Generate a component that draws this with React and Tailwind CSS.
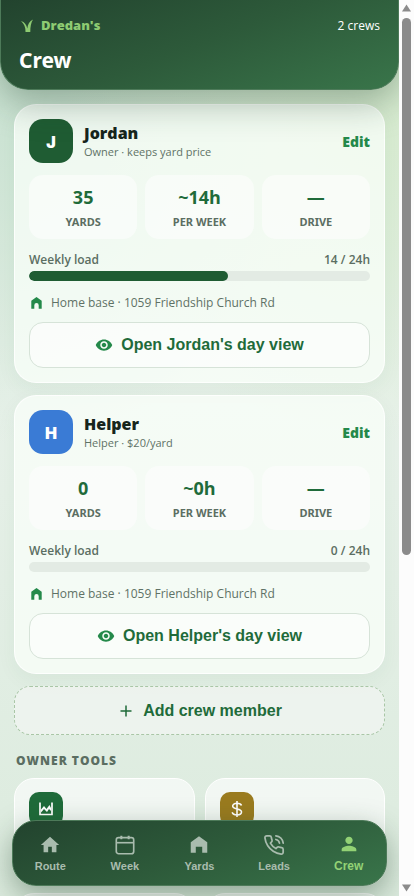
import React from "react";

const crews = [
  {
    name: "Jordan",
    initial: "J",
    detail: "Owner · keeps yard price",
    avatar: "bg-[#1f5c33]",
    stats: [["35", "YARDS"], ["~14h", "PER WEEK"], ["—", "DRIVE"]],
    hours: 14,
  },
  {
    name: "Helper",
    initial: "H",
    detail: "Helper · $20/yard",
    avatar: "bg-[#3a7bd5]",
    stats: [["0", "YARDS"], ["~0h", "PER WEEK"], ["—", "DRIVE"]],
    hours: 0,
  },
];
const CAPACITY = 24;

function GrassIcon() {
  return (
    <svg width="16" height="16" viewBox="0 0 16 16" fill="#8ecb72" aria-hidden="true">
      <path d="M2 3C5.500 4 7.400 6.500 8.300 10.500 8.800 6.500 10.500 3 14 1.500 12 4.500 11.300 9 11.300 14H6.500C6.800 9.500 5 5.500 2 3Z" />
    </svg>
  );
}

function CottageIcon({ size, className }) {
  return (
    <svg width={size} height={size} viewBox="0 0 24 24" fill="currentColor" className={className} aria-hidden="true">
      <path d="M12 2.500 3 9v11.500h5.500V14h7v6.500H21V9Z" />
    </svg>
  );
}

function BaseIcon() {
  return (
    <svg width="14" height="14" viewBox="0 0 14 14" fill="#24894a" aria-hidden="true">
      <path d="M7.500 1 2.300 4.700V12.700H5.300V9.200a2.200 2.200 0 0 1 4.400 0V12.700H12.700V4.700Z" />
    </svg>
  );
}

function EyeIcon() {
  return (
    <svg width="18" height="18" viewBox="0 0 24 24" fill="#24894a" aria-hidden="true">
      <path d="M12 4.500C7 4.500 2.730 7.610 1 12c1.730 4.390 6 7.500 11 7.500s9.270-3.110 11-7.500c-1.730-4.390-6-7.500-11-7.500zM12 17c-2.760 0-5-2.240-5-5s2.240-5 5-5 5 2.240 5 5-2.240 5-5 5zm0-8c-1.660 0-3 1.340-3 3s1.340 3 3 3 3-1.340 3-3-1.340-3-3-3z" />
    </svg>
  );
}

function RouteIcon() {
  return (
    <svg width="22" height="22" viewBox="0 0 24 24" fill="currentColor" aria-hidden="true">
      <path d="M10 20v-6h4v6h5v-8h3L12 3 2 12h3v8z" />
    </svg>
  );
}

function CalendarIcon() {
  return (
    <svg width="22" height="22" viewBox="0 0 24 24" fill="none" stroke="currentColor" strokeWidth="1.800" aria-hidden="true">
      <rect x="2.500" y="4" width="19" height="17.500" rx="2.500" />
      <path d="M2.500 9.500h19" />
      <path d="M8 1.800v4M16 1.800v4" strokeWidth="2.200" />
    </svg>
  );
}

function PhoneIcon() {
  return (
    <svg width="22" height="22" viewBox="0 0 24 24" fill="none" stroke="currentColor" strokeWidth="1.900" strokeLinecap="round" strokeLinejoin="round" aria-hidden="true">
      <path d="M14.050 2a9 9 0 0 1 8 7.940M14.050 6A5 5 0 0 1 18 10" />
      <path d="M22 16.920v3a2 2 0 0 1-2.180 2 19.790 19.790 0 0 1-8.630-3.070 19.500 19.500 0 0 1-6-6 19.790 19.790 0 0 1-3.070-8.670A2 2 0 0 1 4.110 2h3a2 2 0 0 1 2 1.720 12.840 12.840 0 0 0 .7 2.810 2 2 0 0 1-.45 2.110L8.090 9.910a16 16 0 0 0 6 6l1.270-1.270a2 2 0 0 1 2.110-.45 12.840 12.840 0 0 0 2.810.7A2 2 0 0 1 22 16.920z" />
    </svg>
  );
}

function PersonIcon() {
  return (
    <svg width="22" height="22" viewBox="0 0 24 24" fill="currentColor" aria-hidden="true">
      <path d="M12 12c2.210 0 4-1.790 4-4s-1.790-4-4-4-4 1.790-4 4 1.790 4 4 4zm0 2c-2.670 0-8 1.340-8 4v2h16v-2c0-2.660-5.330-4-8-4z" />
    </svg>
  );
}

function ChartIcon() {
  return (
    <svg width="18" height="18" viewBox="0 0 18 18" aria-hidden="true">
      <path d="M3 2.500V14.500H15V2.500" fill="none" stroke="#fff" strokeWidth="1.700" />
      <path d="M4 9.500 7 6l2.500 3L12.500 5 14 8V11l-2-2-2 3-3-3-3 3.500Z" fill="#fff" />
    </svg>
  );
}

function DollarIcon() {
  return (
    <svg width="20" height="20" viewBox="0 0 20 20" fill="none" stroke="#fff" strokeWidth="1.600" aria-hidden="true">
      <path d="M10 2v16M14.500 6.500C14 5 12.300 4.300 10 4.300c-2.600 0-4.300 1.100-4.300 2.800 0 4.200 8.800 1.600 8.800 5.900 0 1.800-1.800 2.900-4.500 2.900-2.500 0-4.300-1-4.800-2.700" />
    </svg>
  );
}

function CrewCard({ crew }) {
  const labelId = `load-${crew.name}`;
  return (
    <article className="rounded-[22px] border border-white/80 bg-[#f9fff9]/75 p-[14px] shadow-[0_6px_20px_rgba(40,90,55,0.05)]">
      <div className="flex items-center gap-[11px]">
        <div className={`flex size-11 items-center justify-center rounded-[14px] pt-[2px] font-['Inter',sans-serif] text-[16px] font-black text-white ${crew.avatar}`}>
          {crew.initial}
        </div>
        <div className="min-w-0 flex-1">
          <h2 className="text-[16px] leading-[22px] font-extrabold text-[#17251c]">{crew.name}</h2>
          <p className="text-[11px] leading-4 text-[#5f7266]">{crew.detail}</p>
        </div>
        <button type="button" className="text-[14px] font-extrabold text-[#24894a]">Edit</button>
      </div>
      <dl className="mt-3 grid grid-cols-3 gap-2">
        {crew.stats.map(([value, label]) => (
          <div key={label} className="flex h-16 flex-col-reverse items-center justify-center rounded-[14px] bg-[#fdfdfd]/60">
            <dt className="font-['Noto_Sans',sans-serif] text-[11px] leading-5 font-bold text-[#5b6e62]">{label}</dt>
            <dd className="text-[18px] leading-[30px] font-bold text-[#1f6b3a]">{value}</dd>
          </div>
        ))}
      </dl>
      <div className="mt-3 flex justify-between text-[12px] leading-[18px] font-semibold text-[#5b6e62]">
        <span id={labelId}>Weekly load</span>
        <span>{crew.hours} / {CAPACITY}h</span>
      </div>
      <div
        role="progressbar"
        aria-labelledby={labelId}
        aria-valuenow={crew.hours}
        aria-valuemax={CAPACITY}
        className="mt-[2px] h-[10px] overflow-hidden rounded-full bg-[#e3ebe4]"
      >
        <div className="h-full rounded-full bg-[#1f5c33]" style={{ width: `${(crew.hours / CAPACITY) * 100}%` }} />
      </div>
      <p className="mt-3 flex items-center gap-2 text-[12px] leading-5 text-[#5f7266]">
        <BaseIcon />
        Home base · 1059 Friendship Church Rd
      </p>
      <button type="button" className="mt-[9px] flex h-[46px] w-full items-center justify-center gap-2 rounded-[14px] border border-[#d6e3d8] bg-[#fdfdfd]/65 font-['Liberation_Sans',sans-serif] text-[16px] font-bold text-[#1f6b3a]">
        <EyeIcon />
        Open {crew.name}'s day view
      </button>
    </article>
  );
}

const tools = [
  { name: "Reports", color: "bg-[#1f6b3a]", Icon: ChartIcon },
  { name: "Pricing", color: "bg-[#9a7b1f]", Icon: DollarIcon },
];

const tabs = [
  ["Route", RouteIcon],
  ["Week", CalendarIcon],
  ["Yards", CottageIcon],
  ["Leads", PhoneIcon],
  ["Crew", PersonIcon],
];

export default function App() {
  return (
    <div className="flex h-screen overflow-hidden bg-[#fcfcfc] font-['Open_Sans','Noto_Sans',sans-serif]">
      <div className="relative flex min-w-0 flex-1 flex-col overflow-hidden bg-[radial-gradient(circle_at_100%_12%,#d7ebd0_0%,transparent_38%),radial-gradient(circle_at_0%_12%,#cbe3d3_0%,transparent_38%),linear-gradient(180deg,#dcebdc_0%,#e7f1e9_45%,#dcebde_100%)]">
        <header className="relative z-10 shrink-0 rounded-b-[28px] border border-t-0 border-[#4d7a59] bg-[linear-gradient(160deg,#22432e_0%,#2d5a3a_50%,#39754a_100%)] px-[18px] pt-4 pb-[14px] shadow-[0_12px_36px_rgba(25,60,35,0.36)]">
          <div className="flex h-5 items-center justify-between">
            <span className="flex items-center gap-[6px] text-[13px] font-extrabold text-[#8ecb72]">
              <GrassIcon />
              Dredan's
            </span>
            <span className="text-[12px] text-white">2 crews</span>
          </div>
          <h1 className="mt-[10px] font-['Noto_Sans',sans-serif] text-[21px] leading-[29px] font-bold text-white">Crew</h1>
        </header>

        <main className="flex min-h-0 flex-1 flex-col gap-3 overflow-hidden px-[14px] pt-[14px] *:shrink-0">
          {crews.map((crew) => (
            <CrewCard key={crew.name} crew={crew} />
          ))}
          <button type="button" className="flex h-[49px] items-center justify-center gap-2 rounded-[16px] border border-dashed border-[#a9c6a6] bg-[#f7f7f7]/55 font-['Liberation_Sans',sans-serif] text-[16px] font-bold text-[#1f6b3a]">
            <svg width="18" height="18" viewBox="0 0 18 18" stroke="currentColor" strokeWidth="1.500" aria-hidden="true">
              <path d="M9 3.500v11M3.500 9h11" />
            </svg>
            Add crew member
          </button>
          <section>
            <h2 className="mt-[5px] px-[2px] text-[12px] leading-[18px] font-extrabold tracking-[1px] text-[#5b6e62]">OWNER TOOLS</h2>
            <div className="mt-2 grid grid-cols-2 gap-[10px]">
              {tools.map(({ name, color, Icon }) => (
                <div key={name} className="h-[105px] rounded-[20px] border border-white bg-white/60 px-[14px] py-[13px]">
                  <div className={`flex size-[34px] items-center justify-center rounded-[10px] ${color}`}>
                    <Icon />
                  </div>
                </div>
              ))}
              <div className="h-[105px] rounded-[20px] border border-white bg-white/60" />
              <div className="h-[105px] rounded-[20px] border border-white bg-white/60" />
            </div>
          </section>
        </main>

        <nav className="absolute inset-x-3 bottom-[10px] z-20 grid h-[66px] grid-cols-5 rounded-[24px] border border-[#4d7a59] bg-[linear-gradient(160deg,#22432e_0%,#2d5a3a_50%,#39754a_100%)] font-['Liberation_Sans',sans-serif] shadow-[0_10px_30px_rgba(25,60,35,0.4)]">
          {tabs.map(([label, Icon]) => (
            <a
              key={label}
              href={`#${label.toLowerCase()}`}
              aria-current={label === "Crew" ? "page" : undefined}
              className={`flex flex-col items-center justify-center font-bold ${label === "Crew" ? "gap-1 text-[12px] leading-[14px] text-[#93d275]" : "gap-[3px] text-[11px] leading-[14px] text-[#a9bcae]"}`}
            >
              <Icon size={22} />
              {label}
            </a>
          ))}
        </nav>
      </div>

      <div aria-hidden="true" className="flex w-[15px] shrink-0 flex-col items-center py-1">
        <svg width="9" height="8" viewBox="0 0 9 8" fill="#8b8b8b">
          <path d="M4.500 0.500 9 7.500H0Z" />
        </svg>
        <div className="mt-[6px] h-[60.5%] w-[9px] rounded-full bg-[#8b8b8b]" />
        <svg className="mt-auto" width="9" height="8" viewBox="0 0 9 8" fill="#8b8b8b">
          <path d="M4.500 7.500 9 0.500H0Z" />
        </svg>
      </div>
    </div>
  );
}
